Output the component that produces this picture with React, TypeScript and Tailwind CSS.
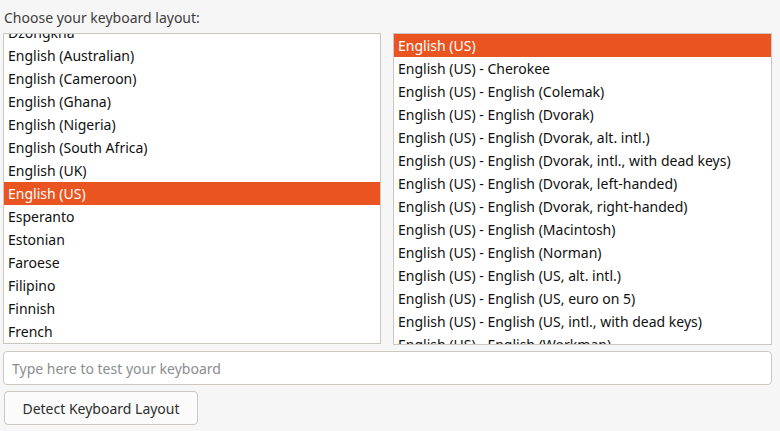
export default function App() {
  const left = [
    'Dzongkha',
    'English (Australian)',
    'English (Cameroon)',
    'English (Ghana)',
    'English (Nigeria)',
    'English (South Africa)',
    'English (UK)',
    'English (US)',
    'Esperanto',
    'Estonian',
    'Faroese',
    'Filipino',
    'Finnish',
    'French',
    'Fula',
  ]

  const right = [
    'English (US)',
    'English (US) - Cherokee',
    'English (US) - English (Colemak)',
    'English (US) - English (Dvorak)',
    'English (US) - English (Dvorak, alt. intl.)',
    'English (US) - English (Dvorak, intl., with dead keys)',
    'English (US) - English (Dvorak, left-handed)',
    'English (US) - English (Dvorak, right-handed)',
    'English (US) - English (Macintosh)',
    'English (US) - English (Norman)',
    'English (US) - English (US, alt. intl.)',
    'English (US) - English (US, euro on 5)',
    'English (US) - English (US, intl., with dead keys)',
    'English (US) - English (Workman)',
  ]

  return (
    <div className="w-[780px] h-[431px] bg-[#f6f6f6] text-[14px] text-[#101010] overflow-hidden" style={{ fontFamily: '"Noto Sans", "Open Sans", sans-serif' }}>
      {/* Label */}
      <div className="h-[33px] pl-[4px] pt-[8px] leading-[20px] text-[#3d3d3d]">Choose your keyboard layout:</div>

      {/* Lists */}
      <div className="flex gap-[12px] pl-[3px] pr-[8px]">
        <div className="w-[378px] h-[311px] border border-[#cdc7c2] bg-white overflow-hidden">
          <div className="-mt-[13px]">
            {left.map((l) => (
              <div
                key={l}
                className={`h-[23px] leading-[23px] pl-[4px] whitespace-nowrap ${l === 'English (US)' ? 'bg-[#e95420] text-white' : ''}`}
              >
                {l}
              </div>
            ))}
          </div>
        </div>
        <div className="w-[379px] h-[312px] border border-[#cdc7c2] bg-white overflow-hidden">
          {right.map((r, i) => (
            <div
              key={r}
              className={`h-[23px] leading-[23px] pl-[4px] whitespace-nowrap ${i === 0 ? 'bg-[#e95420] text-white' : ''}`}
            >
              {r}
            </div>
          ))}
        </div>
      </div>

      {/* Test input */}
      <div className="pl-[3px] pr-[8px] mt-[6px]">
        <input
          type="text"
          placeholder="Type here to test your keyboard"
          className="w-[769px] h-[34px] rounded-[4px] border border-[#cdc7c2] bg-white px-[8px] placeholder-[#8a8e8f] outline-none"
        />
      </div>

      {/* Detect button */}
      <div className="pl-[4px] mt-[6px]">
        <button className="w-[194px] h-[34px] rounded-[4px] border border-[#cdc7c2] bg-[#fbfbfb] text-[#2e2e2e]">
          Detect Keyboard Layout
        </button>
      </div>
    </div>
  )
}
